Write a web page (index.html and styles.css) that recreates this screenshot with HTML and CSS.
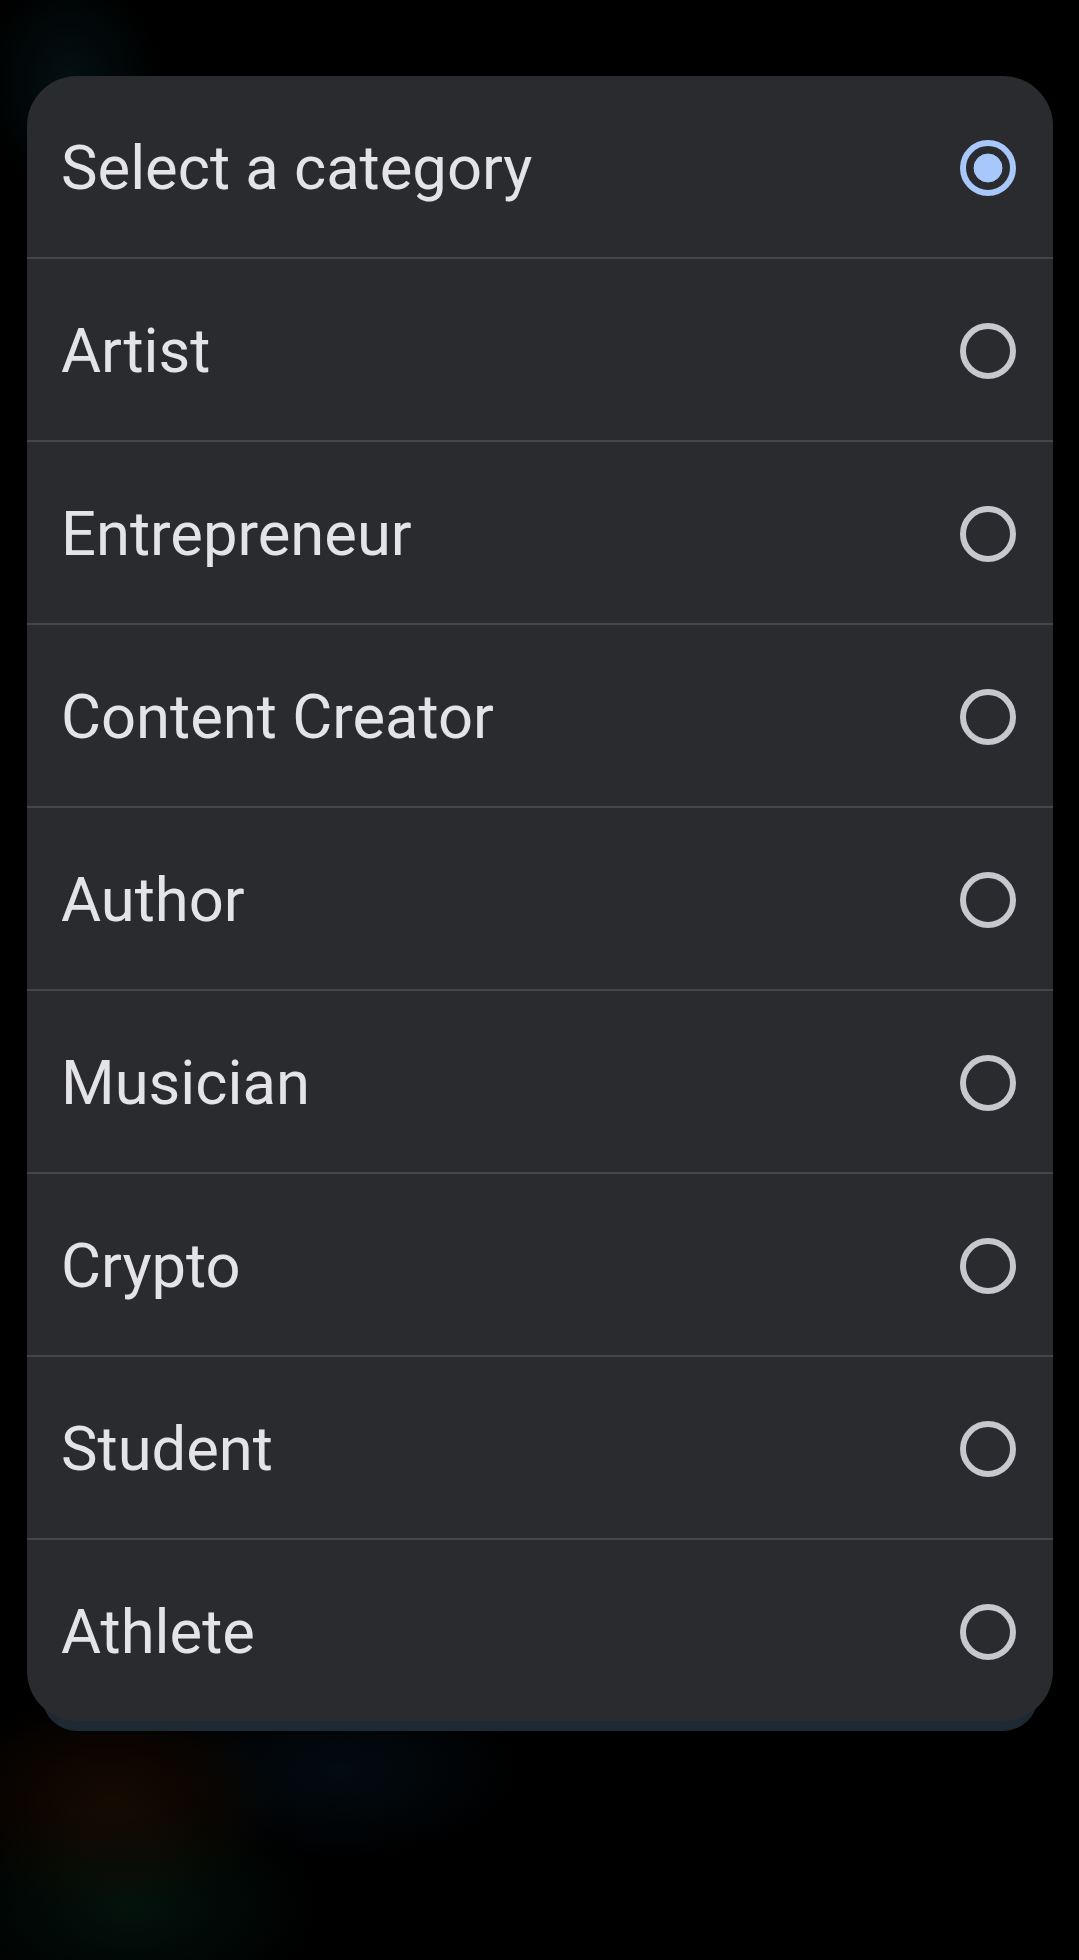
FILE: index.html
```html
<!DOCTYPE html>
<html lang="en">
<head>
<meta charset="utf-8">
<title>Select a category</title>
<link rel="stylesheet" href="styles.css">
</head>
<body>
<main class="screen">
  <ul class="sheet">
    <li class="row"><span class="label">Select a category</span>
      <svg class="radio selected" viewBox="0 0 56 56"><circle cx="28" cy="28" r="25" fill="none" stroke-width="6"/><circle class="dot" cx="28" cy="28" r="14"/></svg></li>
    <li class="row"><span class="label">Artist</span>
      <svg class="radio" viewBox="0 0 56 56"><circle cx="28" cy="28" r="25" fill="none" stroke-width="6"/></svg></li>
    <li class="row"><span class="label">Entrepreneur</span>
      <svg class="radio" viewBox="0 0 56 56"><circle cx="28" cy="28" r="25" fill="none" stroke-width="6"/></svg></li>
    <li class="row"><span class="label">Content Creator</span>
      <svg class="radio" viewBox="0 0 56 56"><circle cx="28" cy="28" r="25" fill="none" stroke-width="6"/></svg></li>
    <li class="row"><span class="label">Author</span>
      <svg class="radio" viewBox="0 0 56 56"><circle cx="28" cy="28" r="25" fill="none" stroke-width="6"/></svg></li>
    <li class="row"><span class="label">Musician</span>
      <svg class="radio" viewBox="0 0 56 56"><circle cx="28" cy="28" r="25" fill="none" stroke-width="6"/></svg></li>
    <li class="row"><span class="label">Crypto</span>
      <svg class="radio" viewBox="0 0 56 56"><circle cx="28" cy="28" r="25" fill="none" stroke-width="6"/></svg></li>
    <li class="row"><span class="label">Student</span>
      <svg class="radio" viewBox="0 0 56 56"><circle cx="28" cy="28" r="25" fill="none" stroke-width="6"/></svg></li>
    <li class="row"><span class="label">Athlete</span>
      <svg class="radio" viewBox="0 0 56 56"><circle cx="28" cy="28" r="25" fill="none" stroke-width="6"/></svg></li>
  </ul>
</main>
</body>
</html>
```
FILE: styles.css
```css
* { box-sizing: border-box; }
html, body {
  margin: 0;
  padding: 0;
  width: 1079px;
  height: 1960px;
  overflow: hidden;
}
body {
  background-color: #000;
  background-image:
    radial-gradient(ellipse 90px 110px at 70px 80px, rgba(10, 40, 45, 0.4), rgba(0,0,0,0) 100%),
    radial-gradient(ellipse 170px 110px at 110px 1800px, rgba(36, 16, 2, 0.6), rgba(0,0,0,0) 100%),
    radial-gradient(ellipse 190px 110px at 130px 1905px, rgba(5, 30, 20, 0.6), rgba(0,0,0,0) 100%),
    radial-gradient(ellipse 180px 90px at 340px 1770px, rgba(5, 18, 28, 0.6), rgba(0,0,0,0) 100%);
  font-family: Roboto, "Noto Sans", sans-serif;
}
.screen {
  padding: 76px 26px 0 27px;
}
.sheet {
  list-style: none;
  margin: 0;
  padding: 0;
  background: #2a2b2f;
  border-radius: 50px;
  box-shadow: 0 25px 0 -15px #1e2a33;
}
.row {
  height: 183px;
  display: flex;
  align-items: center;
  justify-content: space-between;
  padding: 2px 37px 0 34px;
  border-bottom: 2px solid #45464a;
}
.row:last-child {
  height: 181px;
  border-bottom: none;
}
.label {
  font-size: 61.5px;
  color: #e3e3e8;
}
.radio {
  width: 56px;
  height: 56px;
  flex: none;
}
.radio circle {
  stroke: #c6c8cd;
}
.radio.selected circle {
  stroke: #a8c7fa;
}
.radio .dot {
  fill: #a8c7fa;
  stroke: none;
}
```
